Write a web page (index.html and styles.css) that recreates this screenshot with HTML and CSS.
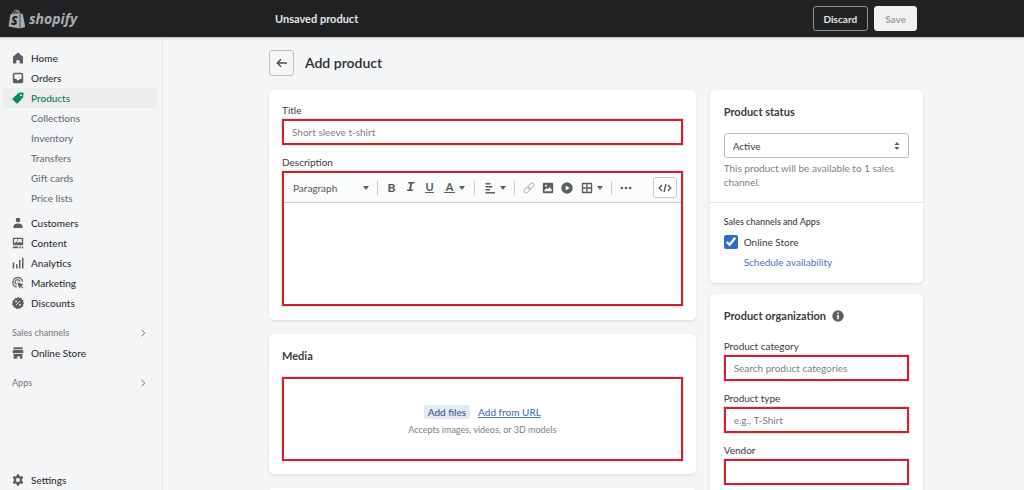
FILE: index.html
```html
<!DOCTYPE html>
<html lang="en">
<head>
<meta charset="utf-8">
<meta name="viewport" content="width=device-width, initial-scale=1">
<title>Add product</title>
<link rel="stylesheet" href="styles.css">
</head>
<body>
<header class="topbar">
  <a class="logo" href="#" aria-label="shopify">
    <svg class="logo-bag" viewBox="0 0 18 20" aria-hidden="true">
      <path d="M2.400 5.200 11.600 4v15.600L.6 17.600z" fill="#a9adb1"/>
      <path d="M12.300 4.200l2.600 1 2.300 12.900-4.900 1.400z" fill="#a9adb1"/>
      <path d="M4.600 5.200C5.200 2.800 6.700 1 8.300 1.100c1.500 0 2 1.600 2 3.300M7.300 4.800C8 2.500 9.200 1.500 10.300 1.800c.9.300 1.300 1.200 1.500 2.400" fill="none" stroke="#a9adb1"/>
      <text x="3" y="16" class="logo-s">S</text>
    </svg>
    <span>shopify</span>
  </a>
  <div class="topbar-area">
    <div class="contextbar">
      <strong>Unsaved product</strong>
      <button class="btn btn-discard" type="button">Discard</button>
      <button class="btn btn-save" type="button" disabled>Save</button>
    </div>
  </div>
</header>

<div class="shell">
  <nav class="sidebar" aria-label="Main">
    <ul class="nav">
      <li><a href="#"><svg class="icon" viewBox="0 0 12 12"><path d="M6 .6 11 4.800V11a.6.6 0 0 1-.6.6H7.700V8.200H4.300v3.400H1.600A.6.6 0 0 1 1 11V4.800z"/></svg>Home</a></li>
      <li><a href="#"><svg class="icon" viewBox="0 0 12 12"><path fill-rule="evenodd" d="M2.500.8h7a1.700 1.700 0 0 1 1.700 1.700v7a1.700 1.700 0 0 1-1.700 1.700h-7A1.700 1.700 0 0 1 .8 9.500v-7A1.700 1.700 0 0 1 2.500.8zM2.400 2.300v4.500h1.800l1 1.400h1.600l1-1.400h1.800V2.300z"/></svg>Orders</a></li>
      <li><a class="current" href="#" aria-current="page"><svg class="icon" viewBox="0 0 12 12"><path fill-rule="evenodd" d="M6.800.8 11 .6a.5.500 0 0 1 .5.500l-.4 4.300-5.300 5.800a1 1 0 0 1-1.400 0L.8 7.700a1 1 0 0 1 0-1.400zM8.900 2.300a1 1 0 1 0 0 2 1 1 0 0 0 0-2z"/></svg>Products</a>
        <ul class="subnav">
          <li><a href="#">Collections</a></li>
          <li><a href="#">Inventory</a></li>
          <li><a href="#">Transfers</a></li>
          <li><a href="#">Gift cards</a></li>
          <li><a href="#">Price lists</a></li>
        </ul>
      </li>
      <li><a href="#"><svg class="icon" viewBox="0 0 12 12"><circle cx="6" cy="3" r="2.300"/><path d="M1.300 9.800c0-2.200 2-3.400 4.700-3.400s4.700 1.200 4.700 3.400c0 .8-.5 1.200-1.200 1.200h-7c-.7 0-1.200-.4-1.200-1.200z"/></svg>Customers</a></li>
      <li><a href="#"><svg class="icon" viewBox="0 0 12 12"><path fill-rule="evenodd" d="M1.800.8h8.400a1 1 0 0 1 1 1v5.400a1 1 0 0 1-1 1H1.800a1 1 0 0 1-1-1V1.800a1 1 0 0 1 1-1zM2.200 2v4.800l2.200-2.500 1.500 1.600 1.800-1.400 2.100 1.700V2z"/><circle cx="5.800" cy="3.100" r=".8"/><path d="M.8 9.600h5.400v1.600H.8zM7.300 9.600h1.500v1.600H7.300zM9.700 9.600h1.500v1.600H9.700z"/></svg>Content</a></li>
      <li><a href="#"><svg class="icon" viewBox="0 0 12 12"><path d="M.7 5.500h1.500v6H.7zM4 7.300h1.500v4.200H4zM7 3h1.500v8.500H7zM10 .7h1.500v10.800H10z"/></svg>Analytics</a></li>
      <li><a href="#"><svg class="icon" viewBox="0 0 12 12"><path class="line" d="M10.500 4.800A4.800 4.800 0 1 0 4.600 10.100M8 4.600a2.500 2.500 0 1 0-3.300 3M5.500 5.400v.3"/><path d="M5.300 5.300l6.300 2.200-2.300 1.200 2 2-.9.9-2-2-1.100 2.200z"/></svg>Marketing</a></li>
      <li><a href="#"><svg class="icon" viewBox="0 0 12 12"><path d="M6 0l1.500 1 1.800-.2.700 1.700 1.500 1-.2 1.700L12 6.600l-1 1.500v1.600l-1.700.6L8.100 11.700l-1.700-.3L4.800 12 3.500 10.800l-1.800-.3-.3-1.800L0 7.400l.6-1.700L.5 3.900l1.500-1L2.700 1.200 4.500 1.300z"/><path class="cut" d="M4.100 8 7.900 4"/><circle class="hole" cx="4.100" cy="4.300" r=".9"/><circle class="hole" cx="7.900" cy="7.800" r=".9"/></svg>Discounts</a></li>
    </ul>
    <a class="nav-heading" href="#">Sales channels<svg class="chevron" viewBox="0 0 8 8"><path d="M2.500.8 5.800 4 2.500 7.200"/></svg></a>
    <ul class="nav">
      <li><a href="#"><svg class="icon" viewBox="0 0 12 12"><path d="M1.500.3h9V2h-9zM1.300 2.700h9.400l.8 2.200c0 .9-.7 1.400-1.500 1.400-.7 0-1.200-.3-1.300-.9-.1.600-.7.900-1.350.9S6.100 6 6 5.400c-.1.600-.7.900-1.350.9s-1.250-.3-1.350-.9c-.1.600-.6.900-1.300.9-.8 0-1.500-.5-1.500-1.400zM1.600 7h8.800v4.700H8V9.400H5.200v2.300H1.600z"/></svg>Online Store</a></li>
    </ul>
    <a class="nav-heading" href="#">Apps<svg class="chevron" viewBox="0 0 8 8"><path d="M2.500.8 5.800 4 2.500 7.200"/></svg></a>
    <ul class="nav nav-bottom">
      <li><a href="#"><svg class="icon" viewBox="0 0 12 12"><path fill-rule="evenodd" d="M4.900.2h2.200l.4 1.700 1 .5 1.700-.5 1.100 1.900L10.100 5v2l1.200 1.200-1.100 1.900-1.700-.5-1 .5-.4 1.700H4.900l-.4-1.700-1-.5-1.700.5L.7 8.200 1.900 7V5L.7 3.800l1.100-1.900 1.700.5 1-.5zM6 3.900a2.100 2.100 0 1 0 0 4.200 2.100 2.100 0 0 0 0-4.200z"/></svg>Settings</a></li>
    </ul>
  </nav>

  <main class="main">
    <div class="page">
      <div class="page-head">
        <button class="back" type="button" aria-label="Back"><svg viewBox="0 0 12 12"><path d="M11 6H1.500M5 2.300 1.300 6 5 9.700"/></svg></button>
        <h1>Add product</h1>
      </div>

      <div class="columns">
        <div class="col col-main">
          <section class="card">
            <div class="field">
              <label for="title">Title</label>
              <input class="text marked" id="title" type="text" placeholder="Short sleeve t-shirt">
            </div>
            <div class="field">
              <label for="description">Description</label>
              <div class="editor marked">
                <div class="toolbar">
                  <span class="format"><select aria-label="Text format"><option>Paragraph</option></select><i class="caret"></i></span>
                  <span class="sep"></span>
                  <button class="tool" type="button" aria-label="Bold"><b>B</b></button>
                  <button class="tool" type="button" aria-label="Italic"><span class="italic">I</span></button>
                  <button class="tool" type="button" aria-label="Underline"><span class="under">U</span></button>
                  <button class="tool tool-menu" type="button" aria-label="Text color"><span class="under under-wide">A</span><i class="caret"></i></button>
                  <span class="sep"></span>
                  <button class="tool tool-menu" type="button" aria-label="Alignment"><svg viewBox="0 0 12 12"><path d="M1.500 1h5v1.400h-5zM1.500 4h7v1.400h-7zM1.500 7h4.500v1.400H1.500zM1.500 10h9.500v1.400H1.500z"/></svg><i class="caret"></i></button>
                  <span class="sep"></span>
                  <button class="tool tool-off" type="button" aria-label="Link"><svg viewBox="0 0 12 12"><g transform="rotate(-45 6 6)"><rect x="0" y="4" width="6.500" height="4" rx="2"/><rect x="5.500" y="4" width="6.500" height="4" rx="2"/></g></svg></button>
                  <button class="tool" type="button" aria-label="Image"><svg viewBox="0 0 12 12"><path fill-rule="evenodd" d="M2 .8h8A1.200 1.200 0 0 1 11.200 2v8a1.200 1.200 0 0 1-1.200 1.200H2A1.200 1.200 0 0 1 .8 10V2A1.200 1.200 0 0 1 2 .8zM2.300 9.300h7.400V7.600L7.500 5 5.700 7.300 4.400 6 2.300 8.400zM4 2.800a1 1 0 1 0 0 2 1 1 0 0 0 0-2z"/></svg></button>
                  <button class="tool" type="button" aria-label="Video"><svg viewBox="0 0 12 12"><path fill-rule="evenodd" d="M6 .3a5.700 5.700 0 1 0 0 11.400A5.700 5.700 0 0 0 6 .3zM4.700 3.500 8.700 6l-4 2.500z"/></svg></button>
                  <button class="tool tool-menu" type="button" aria-label="Table"><svg viewBox="0 0 12 12"><path fill-rule="evenodd" d="M2 .8h8A1.200 1.200 0 0 1 11.200 2v8a1.200 1.200 0 0 1-1.200 1.200H2A1.200 1.200 0 0 1 .8 10V2A1.200 1.200 0 0 1 2 .8zM2.200 2.200v3.100h3.100V2.200zM6.700 2.200v3.100h3.100V2.200zM2.200 6.700v3.100h3.100V6.700zM6.700 6.700v3.100h3.100V6.700z"/></svg><i class="caret"></i></button>
                  <span class="sep"></span>
                  <button class="tool" type="button" aria-label="More"><svg viewBox="0 0 12 12"><circle cx="1.800" cy="6" r="1.300"/><circle cx="6" cy="6" r="1.300"/><circle cx="10.200" cy="6" r="1.300"/></svg></button>
                  <button class="code" type="button" aria-label="Show HTML"><svg viewBox="0 0 14 12"><path d="M4 3 1.200 6 4 9M10 3l2.800 3L10 9M8 2 6 10"/></svg></button>
                </div>
                <textarea id="description"></textarea>
              </div>
            </div>
          </section>

          <section class="card card-media">
            <h2>Media</h2>
            <div class="drop marked">
              <div class="drop-actions">
                <button class="add-files" type="button">Add files</button>
                <a href="#">Add from URL</a>
              </div>
              <p>Accepts images, videos, or 3D models</p>
            </div>
          </section>
          <section class="card"></section>
        </div>

        <div class="col col-side">
          <section class="card card-status">
            <div class="status">
              <h2>Product status</h2>
              <div class="select">
                <select aria-label="Product status"><option>Active</option></select>
                <svg viewBox="0 0 6 10"><path d="M3 1l2.600 3H.4zM3 9 .4 6h5.200z"/></svg>
              </div>
              <p>This product will be available to 1 sales channel.</p>
            </div>
            <div class="channels">
              <h3>Sales channels and Apps</h3>
              <label class="check"><input type="checkbox" checked>Online Store</label>
              <a href="#">Schedule availability</a>
            </div>
          </section>

          <section class="card card-org">
            <h2>Product organization <svg class="info" viewBox="0 0 12 12"><path fill-rule="evenodd" d="M6 .3a5.700 5.700 0 1 0 0 11.400A5.700 5.700 0 0 0 6 .3zM5.200 2.600h1.600v1.500H5.200zM5.200 5h1.600v4.200H5.200z"/></svg></h2>
            <div class="field">
              <label for="category">Product category</label>
              <input class="text marked" id="category" type="text" placeholder="Search product categories">
            </div>
            <div class="field">
              <label for="type">Product type</label>
              <input class="text marked" id="type" type="text" placeholder="e.g., T-Shirt">
            </div>
            <div class="field">
              <label for="vendor">Vendor</label>
              <input class="text marked" id="vendor" type="text">
            </div>
          </section>
        </div>
      </div>
    </div>
  </main>
</div>
</body>
</html>
```

FILE: styles.css
```css
* { box-sizing: border-box; }

body {
  margin: 0;
  height: 100vh;
  display: flex;
  flex-direction: column;
  overflow: hidden;
  background: #f4f5f7;
  color: #3a3c3f;
  font: 10px/14px Lato, "Noto Sans", sans-serif;
}

h1, h2, h3, p, ul { margin: 0; padding: 0; }
ul { list-style: none; }
button, input, select, textarea { font: inherit; color: inherit; }
button { padding: 0; border: 0; background: none; }
a { color: #4474b8; text-decoration: none; }

/* Top bar */
.topbar {
  flex: none;
  display: flex;
  align-items: center;
  height: 37px;
  background: #202223;
  box-shadow: 0 1px 2px #00000040;
  z-index: 1;
}
.logo {
  flex: none;
  display: flex;
  align-items: center;
  gap: 3px;
  width: 163px;
  padding-left: 8px;
  color: #a9adb1;
  font: italic 700 14px/20px "Open Sans", sans-serif;
}
.logo-bag { width: 18px; height: 20px; }
.logo-s { font: italic 800 12px "Open Sans", sans-serif; fill: #202223; }
.topbar-area { flex: 1; padding: 0 8px 0 13px; }
.contextbar {
  display: flex;
  align-items: center;
  gap: 6px;
  max-width: 654px;
  margin: 0 auto;
  padding: 0 6px;
  color: #e3e5e7;
}
.contextbar strong { flex: 1; font-size: 11px; font-weight: 700; }
.btn {
  height: 25px;
  padding: 0 10px;
  border: 1px solid #8c9196;
  border-radius: 3px;
  font-weight: 700;
}
.btn-save { background: #f1f2f3; border-color: #f1f2f3; color: #9a9da0; }

/* Sidebar */
.shell { flex: 1; min-height: 0; display: flex; }
.sidebar {
  flex: none;
  display: flex;
  flex-direction: column;
  width: 163px;
  padding-top: 11px;
  border-right: 1px solid #e6e7e9;
  font-weight: 500;
}
.nav a {
  display: flex;
  align-items: center;
  gap: 7px;
  height: 20px;
  margin: 0 5px 0 3px;
  padding-left: 9px;
  border-radius: 3px;
  color: #303235;
}
.nav .current { background: #ededee; color: #0b7a57; }
.nav .subnav { padding-bottom: 5px; }
.nav .subnav a { padding-left: 28px; color: #6d7175; }
.icon { width: 12px; height: 12px; fill: #5c5f62; }
.current .icon { fill: #0b8a60; }
.icon .line { fill: none; stroke: #5c5f62; stroke-width: 1.2; }
.icon .cut { stroke: #f4f5f7; }
.icon .hole { fill: #f4f5f7; }
.nav-heading {
  display: flex;
  align-items: center;
  justify-content: space-between;
  height: 20px;
  margin-top: 10px;
  padding: 0 15px 0 12px;
  color: #7a7d81;
  font-size: 9px;
}
.chevron { width: 8px; height: 8px; fill: none; stroke: #6d7175; }
.nav-bottom { margin-top: auto; }

/* Page */
.main { flex: 1; min-width: 0; padding: 13px 8px 0 13px; }
.page { max-width: 654px; margin: 0 auto; }
.page-head { display: flex; align-items: center; gap: 11px; margin-bottom: 14px; }
.back {
  display: grid;
  place-items: center;
  width: 25px;
  height: 26px;
  border: 1px solid #babfc3;
  border-radius: 3px;
}
.back svg { width: 12px; height: 12px; fill: none; stroke: #4c4f52; stroke-width: 1.4; }
h1 { font-size: 14px; line-height: 20px; font-weight: 600; color: #2b2d30; }
h2 { font-size: 11px; line-height: 16px; font-weight: 700; }
h3 { font-size: 9px; line-height: 14px; font-weight: 500; }

.columns { display: grid; grid-template-columns: 2fr 1fr; gap: 14px; }
.col { display: flex; flex-direction: column; min-width: 0; }
.col-main { gap: 14px; }
.col-side { gap: 11px; }
.card {
  padding: 13px 13px 14px;
  background: #fff;
  border-radius: 5px;
  box-shadow: 0 1px 3px #1718181f;
}

.field + .field { margin-top: 10px; }
.field > label { display: block; margin-bottom: 2px; }
.marked { border: 2px solid #c9252f; box-shadow: 0 0 1px #e0303a; }
.text {
  display: block;
  width: 100%;
  height: 26px;
  padding: 0 8px;
  background: #fff;
  outline: 0;
}
.text::placeholder { color: #7c7f83; opacity: 1; }

/* Rich text editor */
.toolbar {
  display: flex;
  align-items: center;
  height: 30px;
  padding: 0 4px 0 9px;
  background: #fafbfb;
  border-bottom: 1px solid #c9cccf;
  color: #55585b;
}
.format { display: flex; align-items: center; width: 80px; padding-right: 4px; }
.format select { flex: 1; min-width: 0; padding: 0; border: 0; background: none; appearance: none; }
.caret { border: 3px solid transparent; border-top: 4px solid #5c5f62; border-bottom: 0; }
.sep { width: 1px; height: 14px; margin: 0 4px; background: #c9cccf; }
.tool { display: grid; place-items: center; width: 19px; height: 19px; }
.tool svg { width: 12px; height: 12px; fill: #5c5f62; }
.tool b { font-size: 12px; font-weight: 700; }
.tool-menu { display: flex; align-items: center; gap: 4px; width: 31px; padding-left: 5px; }
.tool-off svg { fill: none; stroke: #b5b8bb; }
.italic { font: italic 700 13px "Liberation Mono", monospace; }
.under { width: 9px; border-bottom: 1px solid #5c5f62; font-size: 11px; line-height: 10px; font-weight: 700; text-align: center; }
.under-wide { width: 11px; }
.code {
  display: grid;
  place-items: center;
  width: 24px;
  height: 21px;
  margin-left: auto;
  border: 1px solid #c4c7ca;
  border-radius: 3px;
  background: #fff;
}
.code svg { width: 14px; height: 12px; fill: none; stroke: #4c4f52; stroke-width: 1.3; }
.editor textarea {
  display: block;
  width: 100%;
  height: 101px;
  padding: 8px;
  border: 0;
  outline: 0;
  resize: none;
  background: #fff;
}

/* Media */
.card-media { padding: 14px 13px 13px; }
.card-media h2 { margin-bottom: 13px; }
.drop {
  display: flex;
  flex-direction: column;
  align-items: center;
  justify-content: center;
  gap: 4px;
  height: 84px;
  padding-top: 4px;
}
.drop-actions { display: flex; align-items: center; gap: 8px; font-weight: 500; }
.drop-actions a { text-decoration: underline; }
.add-files { padding: 0 4px; border-radius: 2px; background: #e4eaf6; color: #41588a; }
.drop p { color: #7c7f83; font-size: 9px; }

/* Right column */
.card-status { padding: 0; }
.status { padding: 14px 14px 13px; border-bottom: 1px solid #e1e3e5; }
.status h2 { margin-bottom: 13px; }
.select { display: flex; align-items: center; margin-bottom: 3px; }
.select select {
  flex: 1;
  height: 25px;
  padding: 0 8px;
  border: 1px solid #babfc3;
  border-radius: 3px;
  background: #fff;
  appearance: none;
}
.select svg { width: 6px; height: 10px; margin: 0 9px 0 -15px; fill: #5c5f62; pointer-events: none; }
.status p { color: #7c7f83; }
.channels {
  display: flex;
  flex-direction: column;
  align-items: flex-start;
  gap: 6px;
  padding: 12px 14px 14px;
}
.check { display: flex; align-items: center; gap: 6px; }
.check input { width: 14px; height: 14px; margin: 0; accent-color: #2c6ecb; }
.channels a { margin-left: 20px; }
.card-org { padding: 14px; }
.card-org h2 { display: flex; align-items: center; gap: 6px; margin-bottom: 15px; }
.info { width: 12px; height: 12px; fill: #5c5f62; }
```
